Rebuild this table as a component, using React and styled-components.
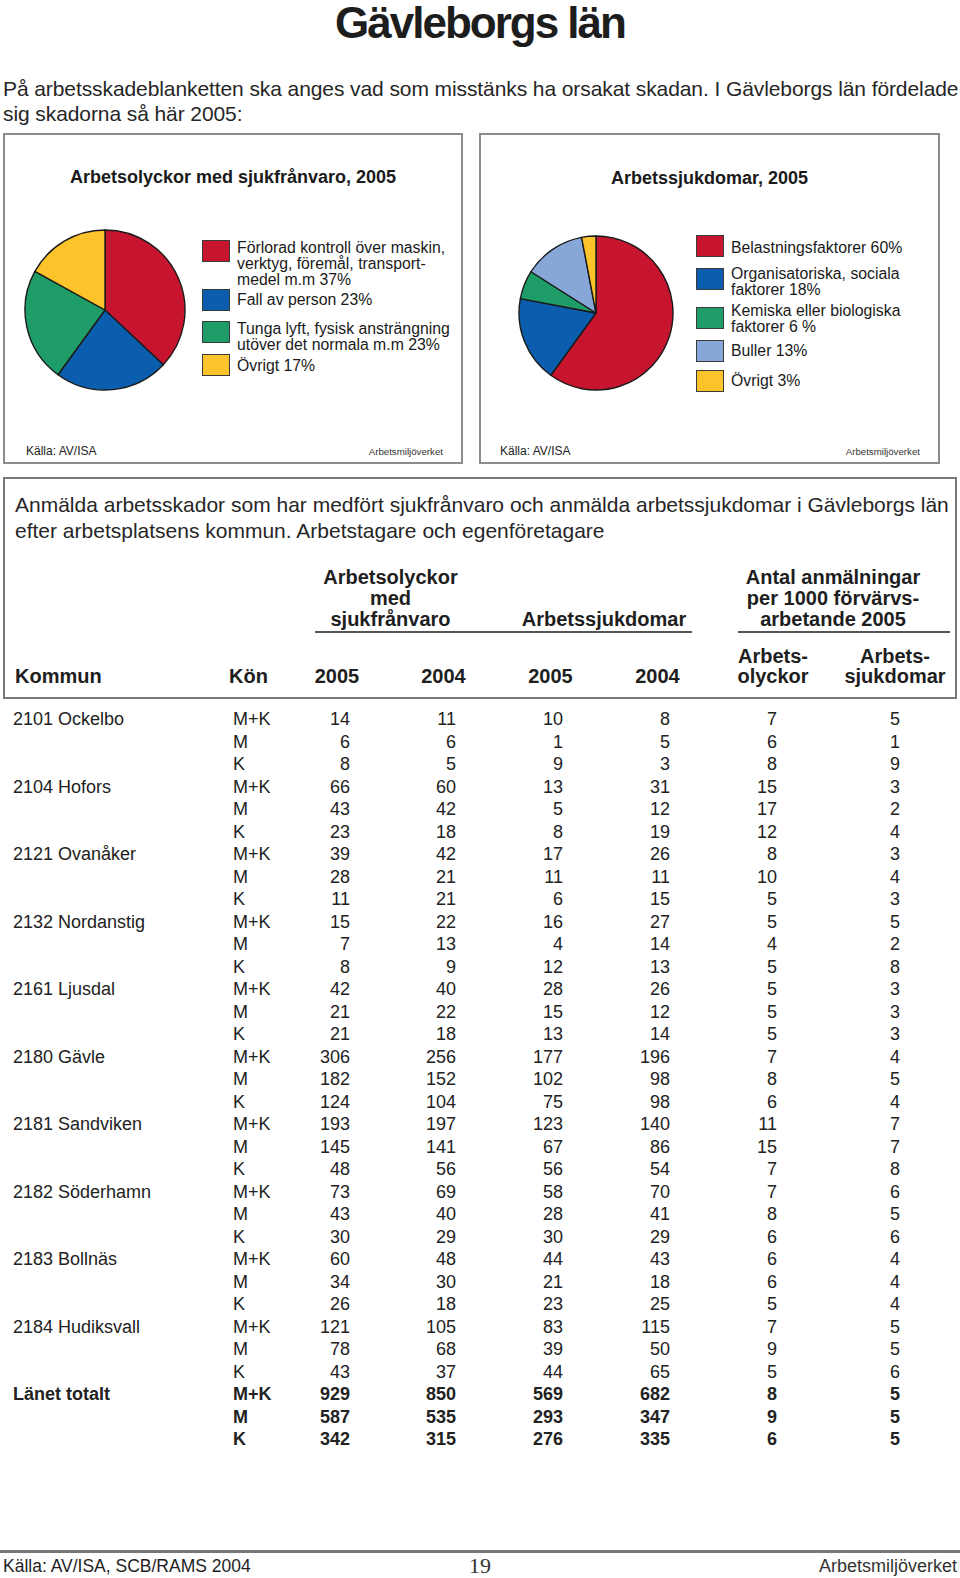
import React from "react";
import styled, { createGlobalStyle } from "styled-components";

const GlobalStyle = createGlobalStyle`
  html, body {
    margin: 0;
    padding: 0;
    background: #fff;
  }
  body {
    font-family: "Liberation Sans", Arial, sans-serif;
    color: #222;
  }
`;

const Page = styled.div`
  width: 960px;
  min-height: 1578px;
  box-sizing: border-box;
  padding: 0 3px;
  display: flex;
  flex-direction: column;
`;

const Title = styled.h1`
  margin: 0;
  height: 46px;
  font-size: 44px;
  line-height: 46px;
  letter-spacing: -2px;
  font-weight: 700;
  text-align: center;
  color: #1d1d1d;
`;

const Intro = styled.p`
  margin: 30px 0 0;
  font-size: 21px;
  line-height: 25px;
  letter-spacing: -0.09px;
  white-space: nowrap;
  color: #262626;
`;

const ChartRow = styled.div`
  display: flex;
  gap: 16px;
  margin-top: 7px;
`;

const Panel = styled.div`
  width: ${(p) => p.$w}px;
  height: 331px;
  box-sizing: border-box;
  border: 2px solid #8c8c8c;
  display: flex;
  flex-direction: column;
`;

const PanelTitle = styled.div`
  margin-top: ${(p) => p.$top}px;
  font-size: 18px;
  line-height: 20px;
  font-weight: 700;
  text-align: center;
  color: #1a1a1a;
`;

const PanelBody = styled.div`
  display: flex;
  align-items: flex-start;
  margin-top: 40px;
`;

const Pie = styled.svg`
  display: block;
  flex: none;
  margin-left: ${(p) => p.$ml}px;
  margin-top: ${(p) => p.$mt}px;
`;

const Legend = styled.div`
  display: flex;
  flex-direction: column;
  margin-left: ${(p) => p.$ml}px;
  margin-top: ${(p) => p.$mt}px;
`;

const LegendItem = styled.div`
  display: flex;
  align-items: flex-start;
  gap: 7px;
  margin-top: ${(p) => p.$mt || 0}px;
`;

const Swatch = styled.span`
  flex: none;
  width: 28px;
  height: 22px;
  box-sizing: border-box;
  border: 1px solid #3a3a3a;
  background: ${(p) => p.$c};
`;

const LegendText = styled.span`
  font-size: 15.8px;
  line-height: 16px;
  margin-top: ${(p) => p.$mt || 0}px;
  color: #1a1a1a;
`;

const PanelFoot = styled.div`
  margin-top: auto;
  display: flex;
  justify-content: space-between;
  align-items: baseline;
  padding: 0 18px 2px ${(p) => p.$pl}px;
  line-height: 16px;
`;

const Source = styled.span`
  font-size: 12px;
  color: #222;
`;

const Brand = styled.span`
  font-size: 9.7px;
  color: #333;
`;

const TableBox = styled.div`
  margin-top: 13px;
  height: 222px;
  box-sizing: border-box;
  border: 2px solid #7a7a7a;
  padding: 13px 0 0 10px;
`;

const Caption = styled.p`
  margin: 0;
  font-size: 21px;
  line-height: 26px;
  white-space: nowrap;
  color: #262626;
`;

const HeadGrid = styled.div`
  display: grid;
  grid-template-columns: 214px 55px 106px 107px 107px 107px 124px 120px;
  margin-top: 23px;
  font-size: 20px;
  font-weight: 700;
  color: #1e1e1e;
`;

const GroupHead = styled.div`
  grid-column: ${(p) => p.$col};
  grid-row: 1;
  align-self: end;
  text-align: center;
  line-height: 21px;
`;

const Rule = styled.div`
  grid-column: ${(p) => p.$col};
  grid-row: 2;
  height: 2px;
  margin: 1px ${(p) => p.$mr}px 0 ${(p) => p.$ml}px;
  background: #555;
`;

const ColHead = styled.div`
  grid-row: 3;
  align-self: end;
  margin-top: 13px;
  line-height: 20px;
  text-align: ${(p) => p.$align || "center"};
`;

const DataGrid = styled.div`
  display: grid;
  grid-template-columns: 220px 67px 50px 106px 107px 107px 107px 123px;
  padding-left: 10px;
  margin-top: 9px;
  font-size: 18px;
  line-height: 22.5px;
  color: #222;
`;

const Cell = styled.div`
  font-weight: ${(p) => (p.$bold ? 700 : 400)};
  text-align: ${(p) => (p.$num ? "right" : "left")};
  white-space: nowrap;
`;

const Footer = styled.div`
  margin-top: auto;
  height: 25px;
  border-top: 3px solid #777;
  display: grid;
  grid-template-columns: 1fr auto 1fr;
  align-items: center;
  margin-left: -3px;
  margin-right: -3px;
  padding: 0 3px;
`;

const FootSource = styled.span`
  font-size: 17.5px;
  color: #1e1e1e;
`;

const PageNo = styled.span`
  font-family: "Liberation Serif", "Times New Roman", serif;
  font-size: 22px;
  color: #333;
`;

const FootBrand = styled.span`
  font-size: 18px;
  color: #333;
  text-align: right;
`;

const COLORS = {
  red: "#c8152f",
  blue: "#0b5dad",
  green: "#1f9d69",
  yellow: "#fcc42a",
  sky: "#87a7d8",
};

function slicePath(cx, cy, r, a0, a1) {
  const p = (a) => [
    cx + r * Math.sin(2 * Math.PI * a),
    cy - r * Math.cos(2 * Math.PI * a),
  ];
  const [x0, y0] = p(a0);
  const [x1, y1] = p(a1);
  const large = a1 - a0 > 0.5 ? 1 : 0;
  return `M${cx},${cy} L${x0},${y0} A${r},${r} 0 ${large} 1 ${x1},${y1} Z`;
}

function PieChart({ size, r, slices, ml, mt }) {
  const c = size / 2;
  let acc = 0;
  return (
    <Pie width={size} height={size} viewBox={`0 0 ${size} ${size}`} $ml={ml} $mt={mt}>
      {slices.map((s, i) => {
        const a0 = acc;
        acc += s.v;
        return (
          <path
            key={i}
            d={slicePath(c, c, r, a0, acc)}
            fill={s.c}
            stroke="#1a1a1a"
            strokeWidth="1.4"
            strokeLinejoin="round"
          />
        );
      })}
    </Pie>
  );
}

const rows = [
  ["2101 Ockelbo", [[14, 11, 10, 8, 7, 5], [6, 6, 1, 5, 6, 1], [8, 5, 9, 3, 8, 9]]],
  ["2104 Hofors", [[66, 60, 13, 31, 15, 3], [43, 42, 5, 12, 17, 2], [23, 18, 8, 19, 12, 4]]],
  ["2121 Ovanåker", [[39, 42, 17, 26, 8, 3], [28, 21, 11, 11, 10, 4], [11, 21, 6, 15, 5, 3]]],
  ["2132 Nordanstig", [[15, 22, 16, 27, 5, 5], [7, 13, 4, 14, 4, 2], [8, 9, 12, 13, 5, 8]]],
  ["2161 Ljusdal", [[42, 40, 28, 26, 5, 3], [21, 22, 15, 12, 5, 3], [21, 18, 13, 14, 5, 3]]],
  ["2180 Gävle", [[306, 256, 177, 196, 7, 4], [182, 152, 102, 98, 8, 5], [124, 104, 75, 98, 6, 4]]],
  ["2181 Sandviken", [[193, 197, 123, 140, 11, 7], [145, 141, 67, 86, 15, 7], [48, 56, 56, 54, 7, 8]]],
  ["2182 Söderhamn", [[73, 69, 58, 70, 7, 6], [43, 40, 28, 41, 8, 5], [30, 29, 30, 29, 6, 6]]],
  ["2183 Bollnäs", [[60, 48, 44, 43, 6, 4], [34, 30, 21, 18, 6, 4], [26, 18, 23, 25, 5, 4]]],
  ["2184 Hudiksvall", [[121, 105, 83, 115, 7, 5], [78, 68, 39, 50, 9, 5], [43, 37, 44, 65, 5, 6]]],
  ["Länet totalt", [[929, 850, 569, 682, 8, 5], [587, 535, 293, 347, 9, 5], [342, 315, 276, 335, 6, 5]], true],
];

const sexes = ["M+K", "M", "K"];

export default function App() {
  return (
    <>
      <GlobalStyle />
      <Page>
        <Title>Gävleborgs län</Title>
        <Intro>
          På arbetsskadeblanketten ska anges vad som misstänks ha orsakat skadan. I Gävleborgs län fördelade
          <br />
          sig skadorna så här 2005:
        </Intro>

        <ChartRow>
          <Panel $w={460}>
            <PanelTitle $top={32}>Arbetsolyckor med sjukfrånvaro, 2005</PanelTitle>
            <PanelBody>
              <PieChart
                size={166}
                r={80}
                ml={17}
                mt={0}
                slices={[
                  { v: 0.37, c: COLORS.red },
                  { v: 0.23, c: COLORS.blue },
                  { v: 0.23, c: COLORS.green },
                  { v: 0.17, c: COLORS.yellow },
                ]}
              />
              <Legend $ml={14} $mt={13}>
                <LegendItem>
                  <Swatch $c={COLORS.red} />
                  <LegendText>
                    Förlorad kontroll över maskin,
                    <br />
                    verktyg, föremål, transport-
                    <br />
                    medel m.m 37%
                  </LegendText>
                </LegendItem>
                <LegendItem $mt={1}>
                  <Swatch $c={COLORS.blue} />
                  <LegendText $mt={3}>Fall av person 23%</LegendText>
                </LegendItem>
                <LegendItem $mt={10}>
                  <Swatch $c={COLORS.green} />
                  <LegendText>
                    Tunga lyft, fysisk ansträngning
                    <br />
                    utöver det normala m.m 23%
                  </LegendText>
                </LegendItem>
                <LegendItem $mt={1}>
                  <Swatch $c={COLORS.yellow} />
                  <LegendText $mt={4}>Övrigt 17%</LegendText>
                </LegendItem>
              </Legend>
            </PanelBody>
            <PanelFoot $pl={21}>
              <Source>Källa: AV/ISA</Source>
              <Brand>Arbetsmiljöverket</Brand>
            </PanelFoot>
          </Panel>

          <Panel $w={461}>
            <PanelTitle $top={33}>Arbetssjukdomar, 2005</PanelTitle>
            <PanelBody>
              <PieChart
                size={160}
                r={77}
                ml={35}
                mt={5}
                slices={[
                  { v: 0.6, c: COLORS.red },
                  { v: 0.18, c: COLORS.blue },
                  { v: 0.06, c: COLORS.green },
                  { v: 0.13, c: COLORS.sky },
                  { v: 0.03, c: COLORS.yellow },
                ]}
              />
              <Legend $ml={20} $mt={7}>
                <LegendItem>
                  <Swatch $c={COLORS.red} />
                  <LegendText $mt={5}>Belastningsfaktorer 60%</LegendText>
                </LegendItem>
                <LegendItem $mt={11}>
                  <Swatch $c={COLORS.blue} />
                  <LegendText $mt={-2}>
                    Organisatoriska, sociala
                    <br />
                    faktorer 18%
                  </LegendText>
                </LegendItem>
                <LegendItem $mt={9}>
                  <Swatch $c={COLORS.green} />
                  <LegendText $mt={-4}>
                    Kemiska eller biologiska
                    <br />
                    faktorer 6 %
                  </LegendText>
                </LegendItem>
                <LegendItem $mt={5}>
                  <Swatch $c={COLORS.sky} />
                  <LegendText $mt={3}>Buller 13%</LegendText>
                </LegendItem>
                <LegendItem $mt={8}>
                  <Swatch $c={COLORS.yellow} />
                  <LegendText $mt={3}>Övrigt 3%</LegendText>
                </LegendItem>
              </Legend>
            </PanelBody>
            <PanelFoot $pl={19}>
              <Source>Källa: AV/ISA</Source>
              <Brand>Arbetsmiljöverket</Brand>
            </PanelFoot>
          </Panel>
        </ChartRow>

        <TableBox>
          <Caption>
            Anmälda arbetsskador som har medfört sjukfrånvaro och anmälda arbetssjukdomar i Gävleborgs län
            <br />
            efter arbetsplatsens kommun. Arbetstagare och egenföretagare
          </Caption>
          <HeadGrid>
            <GroupHead $col="3 / 5">
              Arbetsolyckor
              <br />
              med
              <br />
              sjukfrånvaro
            </GroupHead>
            <GroupHead $col="5 / 7">Arbetssjukdomar</GroupHead>
            <GroupHead $col="7 / 9">
              Antal anmälningar
              <br />
              per 1000 förvärvs-
              <br />
              arbetande 2005
            </GroupHead>
            <Rule $col="3 / 7" $ml={31} $mr={19} />
            <Rule $col="7 / 9" $ml={27} $mr={5} />
            <ColHead $align="left">Kommun</ColHead>
            <ColHead $align="left">Kön</ColHead>
            <ColHead>2005</ColHead>
            <ColHead>2004</ColHead>
            <ColHead>2005</ColHead>
            <ColHead>2004</ColHead>
            <ColHead>
              Arbets-
              <br />
              olyckor
            </ColHead>
            <ColHead>
              Arbets-
              <br />
              sjukdomar
            </ColHead>
          </HeadGrid>
        </TableBox>

        <DataGrid>
          {rows.map(([name, groups, total]) =>
            groups.map((vals, gi) => (
              <React.Fragment key={name + gi}>
                <Cell $bold={total}>{gi === 0 ? name : ""}</Cell>
                <Cell $bold={total}>{sexes[gi]}</Cell>
                {vals.map((v, vi) => (
                  <Cell key={vi} $num $bold={total}>
                    {v}
                  </Cell>
                ))}
              </React.Fragment>
            ))
          )}
        </DataGrid>

        <Footer>
          <FootSource>Källa: AV/ISA, SCB/RAMS 2004</FootSource>
          <PageNo>19</PageNo>
          <FootBrand>Arbetsmiljöverket</FootBrand>
        </Footer>
      </Page>
    </>
  );
}
